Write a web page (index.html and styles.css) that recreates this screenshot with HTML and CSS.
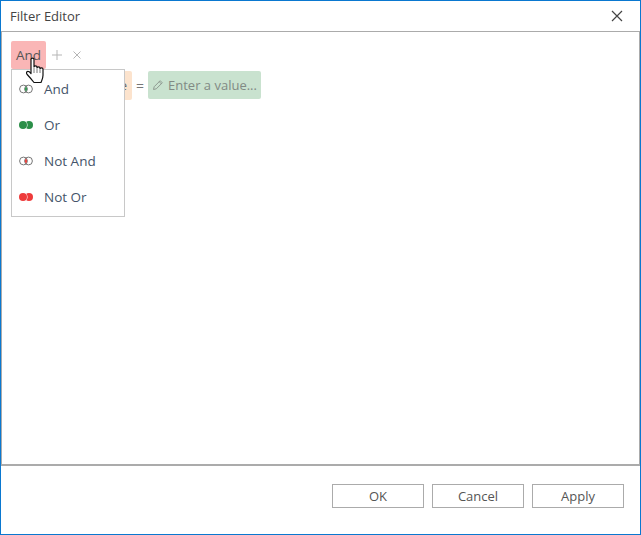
FILE: index.html
```html
<!DOCTYPE html>
<html lang="en">
<head>
<meta charset="utf-8">
<title>Filter Editor</title>
<link rel="stylesheet" href="styles.css">
</head>
<body>
<div class="window">
  <header class="titlebar">
    <span class="title">Filter Editor</span>
    <svg class="close" width="12" height="12" viewBox="0 0 12 12"><path d="M1 1l10 10M11 1L1 11" stroke="#444" stroke-width="1.2" fill="none"/></svg>
  </header>
  <main class="panel">
    <div class="group-row">
      <span class="chip chip-op">And</span>
      <svg class="tool tool-add" width="10" height="10" viewBox="0 0 10 10"><path d="M5 0v10M0 5h10" stroke="#b5b5b5" stroke-width="1" fill="none"/></svg>
      <svg class="tool tool-remove" width="8" height="8" viewBox="0 0 8 8"><path d="M.5.5l7 7M7.5.5l-7 7" stroke="#b5b5b5" stroke-width="1" fill="none"/></svg>
    </div>
    <div class="condition-row">
      <span class="chip chip-field">e</span>
      <span class="equals">=</span>
      <span class="chip chip-value">
        <svg width="12" height="12" viewBox="0 0 12 12"><path d="M1.500 10.500l.7-2.800 6-6 2.100 2.100-6 6zM7.200 2.700l2.100 2.100" stroke="#8f9a92" stroke-width="1" fill="none"/></svg>
        <span>Enter a value...</span>
      </span>
    </div>
    <ul class="menu">
      <li class="menu-item">
        <svg width="16" height="10" viewBox="0 0 16 10"><circle cx="5.500" cy="5" r="3.900" fill="none" stroke="#777" stroke-width="1"/><circle cx="10.500" cy="5" r="3.900" fill="none" stroke="#777" stroke-width="1"/><path d="M8 2.500a3.600 3.600 0 0 1 0 5 3.600 3.600 0 0 1 0-5z" fill="#3a9a55"/></svg>
        <span>And</span>
      </li>
      <li class="menu-item">
        <svg width="16" height="10" viewBox="0 0 16 10"><circle cx="11" cy="5" r="4" fill="#2b8f48"/><circle cx="5" cy="5" r="4.600" fill="#fff"/><circle cx="5" cy="5" r="4" fill="#2b8f48"/></svg>
        <span>Or</span>
      </li>
      <li class="menu-item">
        <svg width="16" height="10" viewBox="0 0 16 10"><circle cx="5.500" cy="5" r="3.900" fill="none" stroke="#777" stroke-width="1"/><circle cx="10.500" cy="5" r="3.900" fill="none" stroke="#777" stroke-width="1"/><path d="M8 2.500a3.600 3.600 0 0 1 0 5 3.600 3.600 0 0 1 0-5z" fill="#e8443f"/></svg>
        <span>Not And</span>
      </li>
      <li class="menu-item">
        <svg width="16" height="10" viewBox="0 0 16 10"><circle cx="11" cy="5" r="4" fill="#ee3b3b"/><circle cx="5" cy="5" r="4.600" fill="#fff"/><circle cx="5" cy="5" r="4" fill="#ee3b3b"/></svg>
        <span>Not Or</span>
      </li>
    </ul>
    <svg class="cursor" width="19" height="27" viewBox="0 0 19 27"><path d="M5 2.500C5 .6 8 .6 8 2.500V10c0-1.600 3-1.600 3 0v1c0-1.600 3-1.600 3 0v1c0-1.600 3-1.300 3 .3v6c0 3-1.200 5-2 7.200H8C6 23 3.500 20 1.200 17.500-.4 15.500 1.200 13.500 3.200 14.700L5 16.500z" fill="#fff" stroke="#111" stroke-width="1.200" stroke-linejoin="round"/><path d="M8 11v5M11 12v4M14 13v3" stroke="#555" stroke-width=".8" fill="none"/></svg>
  </main>
  <footer class="footer">
    <button class="btn">OK</button>
    <button class="btn">Cancel</button>
    <button class="btn">Apply</button>
  </footer>
</div>
</body>
</html>
```

FILE: styles.css
```css
* { box-sizing: border-box; }
html, body { margin: 0; padding: 0; background: #fff; }
body { font-family: "Open Sans", "Liberation Sans", sans-serif; font-size: 13px; color: #444; overflow: hidden; }
.window { width: 641px; height: 535px; border: 1px solid #0a78d0; display: flex; flex-direction: column; }
.titlebar { height: 30px; flex: none; display: flex; align-items: center; justify-content: space-between; padding: 0 17px 0 9px; }
.title { color: #444; }
.close { display: block; }
.panel { position: relative; flex: 1; border: 1px solid #ababab; border-width: 1px 1px 2px 1px; padding: 9px 0 0 9px; }
.group-row { display: flex; align-items: center; height: 28px; font-size: 13.500px; }
.chip { display: inline-flex; align-items: center; border-radius: 2px; }
.chip-op { background: #fab6b6; height: 28px; padding: 0 5px; color: #555; }
.tool-add { margin-left: 6px; }
.tool-remove { margin-left: 11px; }
.condition-row { display: flex; align-items: center; height: 30px; margin-top: 1px; }
.chip-field { width: 121px; height: 29px; background: #fce3cd; padding: 0 5px; justify-content: flex-end; white-space: nowrap; color: #666; }
.equals { width: 16px; text-align: center; color: #777; font-size: 14px; }
.chip-value { width: 113px; height: 28px; background: #c9e2cf; padding-left: 4px; gap: 4px; color: #818a84; white-space: nowrap; }
.chip-value svg { flex: none; }
.menu { position: absolute; left: 9px; top: 37px; width: 114px; height: 148px; margin: 0; padding: 1px 0 0; list-style: none; background: #fff; border: 1px solid #c8c8c8; font-size: 13.500px; }
.menu-item { height: 36px; display: flex; align-items: center; gap: 10px; padding-left: 6px; color: #44546a; }
.cursor { position: absolute; left: 24px; top: 25px; }
.footer { height: 68px; flex: none; display: flex; justify-content: flex-end; align-items: flex-start; gap: 8px; padding: 18px 16px 0 0; }
.btn { width: 92px; height: 24px; background: #fff; border: 1px solid #ababab; font: inherit; color: #555; padding: 0; }
```
